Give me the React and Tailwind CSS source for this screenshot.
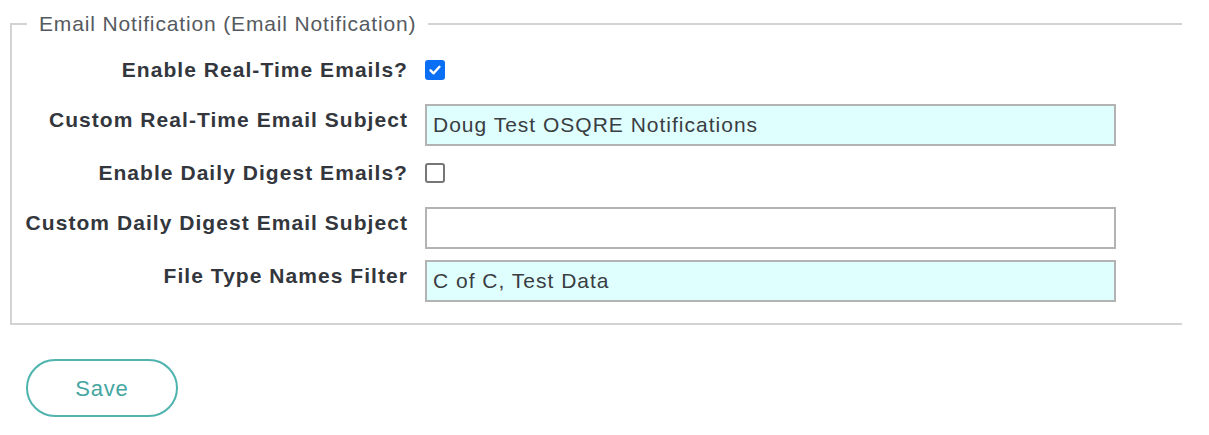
import React from "react";

const font = { fontFamily: '"Liberation Sans", Arial, sans-serif' };

const Check = ({ checked }) =>
  checked ? (
    <div className="w-[20px] h-[20px] rounded-[3px] bg-[#0b6ff5] flex items-center justify-center">
      <svg width="14" height="14" viewBox="0 0 14 14" fill="none">
        <path d="M2.5 7.3 L5.6 10.3 L11.5 3.8" stroke="#fff" strokeWidth="2.4" strokeLinecap="round" strokeLinejoin="round" />
      </svg>
    </div>
  ) : (
    <div className="w-[20px] h-[20px] rounded-[3px] border-2 border-[#767676] bg-white" />
  );

const TextRow = ({ label, value, className }) => (
  <div className={"flex items-start " + className}>
    <label className="w-[413px] shrink-0 text-right pt-[4px] pr-[17px] font-bold text-[21px] leading-[24px] tracking-[1.05px] text-[#33373d]">{label}</label>
    <div className={"w-[691px] h-[42px] border-2 border-[#b3b3b3] px-[6px] flex items-center text-[21px] tracking-[1px] text-[#3a3d42] " + (value ? "bg-[#dfffff]" : "bg-white")}>
      {value}
    </div>
  </div>
);

const CheckRow = ({ label, checked, className }) => (
  <div className={"flex items-center " + className}>
    <label className="w-[413px] shrink-0 text-right pr-[17px] font-bold text-[21px] leading-[24px] tracking-[1.05px] text-[#33373d]">{label}</label>
    <Check checked={checked} />
  </div>
);

export default function App() {
  return (
    <div className="w-[1209px] h-[435px] bg-white overflow-hidden" style={font}>
      <fieldset className="ml-[10px] mt-[12px] w-[1172px] border-l-2 border-t-2 border-b-2 border-[#d3d3d3] pb-[21px]">
        <legend className="ml-[15px] px-[12px] text-[21px] leading-[24px] tracking-[0.85px] text-[#555a60]">Email Notification (Email Notification)</legend>
        <CheckRow label="Enable Real-Time Emails?" checked className="mt-[22px] h-[24px]" />
        <TextRow label="Custom Real-Time Email Subject" value="Doug Test OSQRE Notifications" className="mt-[22px]" />
        <CheckRow label="Enable Daily Digest Emails?" className="mt-[15px] h-[24px]" />
        <TextRow label="Custom Daily Digest Email Subject" value="" className="mt-[22px]" />
        <TextRow label="File Type Names Filter" value="C of C, Test Data" className="mt-[11px]" />
      </fieldset>
      <button className="ml-[26px] mt-[34px] w-[152px] h-[58px] rounded-full border-2 border-[#4fb3ae] text-[#45a6a2] text-[22px] tracking-[0.8px] bg-white">
        Save
      </button>
    </div>
  );
}
